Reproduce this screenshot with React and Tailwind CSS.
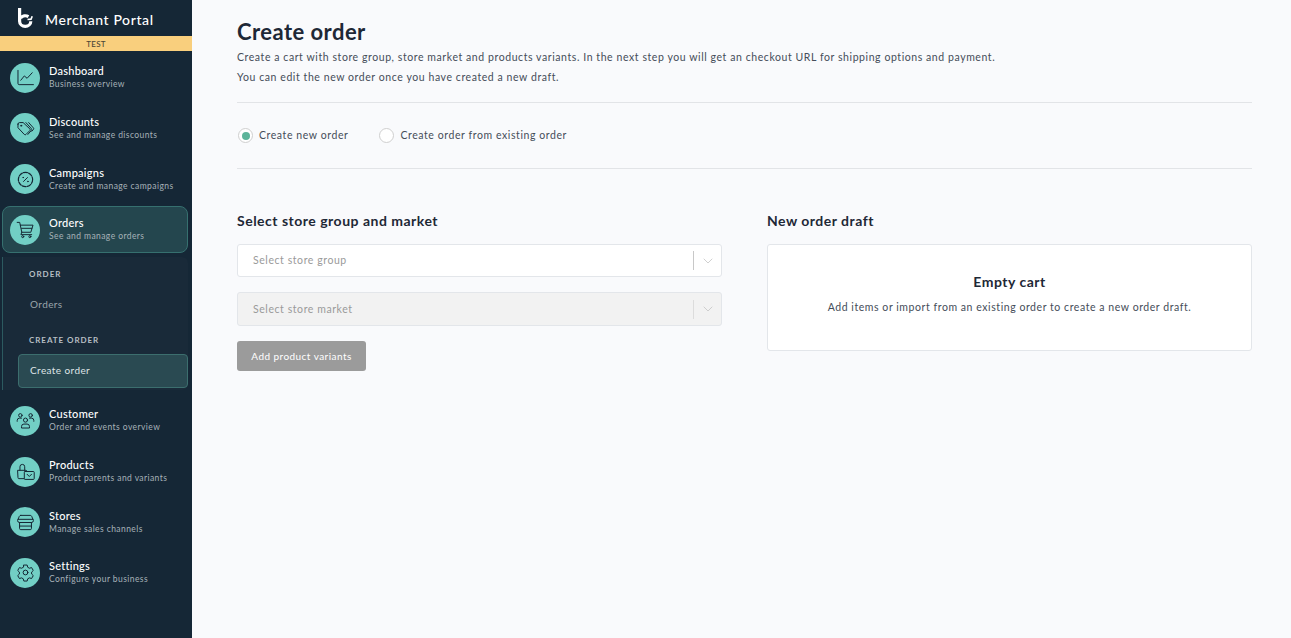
import React from "react";
import { ChevronDown } from "lucide-react";

const I = ({ children }) => (
  <svg width="19" height="19" viewBox="0 0 24 24" fill="none" stroke="#142634" strokeWidth="1.25" strokeLinecap="round" strokeLinejoin="round">{children}</svg>
);
const icons = {
  dash: <I><path d="M2.5 3v16.5a1.5 1.5 0 0 0 1.5 1.5h18" /><path d="M6 15.5l4.5-5.5 3.5 3 6.5-7" /></I>,
  disc: <I><path d="M2.5 6.5V11l8 8.5a1.5 1.5 0 0 0 2.1 0l4.9-4.9a1.5 1.5 0 0 0 0-2.1L9 4.5H4.5a2 2 0 0 0-2 2z" /><path d="M12.5 4.5l7 7.8a1.5 1.5 0 0 1 0 2L15 19.5" /><path d="M16 4.5l6 6.8a1.5 1.5 0 0 1 0 2L20 15.5" /><circle cx="6.5" cy="8.5" r="0.7" /></I>,
  camp: <I><circle cx="12" cy="12" r="9" strokeDasharray="5 1.6" strokeWidth="1.5" /><path d="M9.5 14.5l5-5" /><circle cx="9" cy="9.5" r="0.4" /><circle cx="15" cy="14.5" r="0.4" /></I>,
  cart: <I><path d="M1.5 3h3.2l2.6 12.5h11.4L21.5 6.5H5.5" /><path d="M7.3 15.5L6.2 18.5h13.6" /><path d="M7 10.5h13" /><circle cx="8.5" cy="21" r="1.3" /><circle cx="17.5" cy="21" r="1.3" /></I>,
  cust: <I><circle cx="12" cy="11.5" r="2.6" /><path d="M7 21v-1.5a3 3 0 0 1 3-3h4a3 3 0 0 1 3 3V21z" /><circle cx="5.5" cy="5.5" r="2.2" /><circle cx="18.5" cy="5.5" r="2.2" /><path d="M1.5 13v-1a3 3 0 0 1 3-3h2.5M22.5 13v-1a3 3 0 0 0-3-3H17" /></I>,
  prod: <I><path d="M2.5 10.5h10a1 1 0 0 1 1 1V20a1 1 0 0 1-1 1h-9a1 1 0 0 1-1-1z" /><path d="M5 10.5V6a3 3 0 0 1 6 0v4.5" /><rect x="10.5" y="12" width="12.5" height="10" rx="1" fill="#72cfc5" /><path d="M14 15.5l2.8 2.8 2.8-2.8" /></I>,
  store: <I><path d="M6 3h12a2 2 0 0 1 1.8 1.2L22 9.5a2.5 2.5 0 0 1-2.5 2.5h-15A2.5 2.5 0 0 1 2 9.5l2.2-5.3A2 2 0 0 1 6 3z" /><path d="M2.5 8h19" /><path d="M4.5 12v7.5A1.5 1.5 0 0 0 6 21h12a1.5 1.5 0 0 0 1.5-1.5V12" /><path d="M4.5 16.5h15" /></I>,
  set: <I><path d="M9.9 2.6h4.2l.7 2.8 2.1 1.2 2.8-.8 2.1 3.7-2.1 2 v2.4l2.1 2-2.1 3.7-2.8-.8-2.1 1.2-.7 2.8H9.9l-.7-2.8-2.1-1.2-2.8.8-2.1-3.7 2.1-2v-2.4l-2.1-2 2.1-3.7 2.8.8 2.1-1.2z" /><circle cx="12" cy="12" r="3" /></I>,
};

const NavItem = ({ icon, title, sub, active }) => (
  <div className={`h-[46.67px] mx-[2px] w-[186px] shrink-0 flex items-center pl-[7px] rounded-[8px] border ${active ? "bg-[#24464e] border-[#36706f]" : "border-transparent"}`}>
    <div className="w-[30px] h-[30px] rounded-full bg-[#72cfc5] flex items-center justify-center shrink-0">{icons[icon]}</div>
    <div className="ml-[9px]">
      <div className="text-[11px] leading-[13px] text-white tracking-[0.25px] font-medium">{title}</div>
      <div className="text-[8.5px] leading-[14px] text-[#a7b2b8] tracking-[0.42px]">{sub}</div>
    </div>
  </div>
);

const Select = ({ label, disabled, h, textClass }) => (
  <div className={`${h} flex items-center rounded-[3px] border border-[#e3e6ea] ${disabled ? "bg-[#f2f2f2]" : "bg-white"}`}>
    <span className={`flex-1 pl-[15px] text-[10.5px] text-[#9a9a9a] tracking-[0.57px] ${textClass}`}>{label}</span>
    <span className={`w-px h-[19px] ${disabled ? "bg-[#dcdcdc]" : "bg-[#c8c8c8]"}`} />
    <span className="w-[27px] flex justify-center"><ChevronDown size={16} strokeWidth={1.2} color="#c4c4c4" /></span>
  </div>
);

const Radio = ({ checked, label }) => (
  <div className="flex items-center gap-[6px]">
    <span className="w-[15px] h-[15px] rounded-full border border-[#cfcfcf] bg-white flex items-center justify-center">
      {checked && <span className="w-[8px] h-[8px] rounded-full bg-[#5cb49a]" />}
    </span>
    <span className="text-[10.5px] text-[#454d59] tracking-[0.58px]">{label}</span>
  </div>
);

export default function App() {
  return (
    <div className="flex h-[638px] overflow-hidden bg-[#f9fafc] font-['Lato','Liberation_Sans',sans-serif]">
      <aside className="w-[192px] shrink-0 bg-[#152736] flex flex-col">
        <div className="h-[36px] flex items-center pl-[18px] gap-[11px]">
          <svg width="16" height="20" viewBox="0 0 16 20" fill="none" stroke="#fff" strokeWidth="3.2" className="mt-[-1px]">
            <path d="M1.6 0v13.2a5.6 5.2 0 0 0 11.2 0" />
            <path d="M2.5 10a6 5.4 0 0 1 8-1.4" />
            <path d="M9.5 11.5l3.5-.3 1.2-3" strokeWidth="1.7" />
          </svg>
          <span className="text-[14px] text-white tracking-[0.6px] font-medium mt-[3px]">Merchant Portal</span>
        </div>
        <div className="h-[15px] bg-[#f9cf7d] flex items-center justify-center text-[8px] text-[#4b4636] tracking-[0.3px] font-medium">TEST</div>
        <div className="flex flex-col gap-[4px] pt-[3.37px]">
          <NavItem icon="dash" title="Dashboard" sub="Business overview" />
          <NavItem icon="disc" title="Discounts" sub="See and manage discounts" />
          <NavItem icon="camp" title="Campaigns" sub="Create and manage campaigns" />
          <NavItem icon="cart" title="Orders" sub="See and manage orders" active />
          <div className="mx-[2px] mb-[3.67px] w-[186px] h-[133px] border-l border-[#2c5a60] bg-[#192a39] rounded-r-[6px] pl-[15px]">
            <div className="pl-[11px] pt-[11px] text-[8px] leading-[12px] font-bold tracking-[1px] text-[#b7bfc4]">ORDER</div>
            <div className="pl-[12px] mt-[18px] text-[10px] leading-[13px] tracking-[0.4px] text-[#9aa5ab]">Orders</div>
            <div className="pl-[11px] mt-[23px] text-[8px] leading-[12px] font-bold tracking-[0.95px] text-[#b7bfc4]">CREATE ORDER</div>
            <div className="mt-[8px] h-[34px] flex items-center pl-[11px] pb-[1px] text-[10px] tracking-[0.4px] text-[#dfe5e7] bg-[#2a4a52] border border-[#3c6e6e] rounded-[4px]">Create order</div>
          </div>
          <NavItem icon="cust" title="Customer" sub="Order and events overview" />
          <NavItem icon="prod" title="Products" sub="Product parents and variants" />
          <NavItem icon="store" title="Stores" sub="Manage sales channels" />
          <NavItem icon="set" title="Settings" sub="Configure your business" />
        </div>
      </aside>
      <main className="flex-1 pl-[45px] pr-[39px]">
        <h1 className="pt-[18px] text-[22px] leading-[28px] font-bold text-[#1e2836] tracking-[0.45px]">Create order</h1>
        <p className="mt-[1px] text-[10.5px] leading-[20px] text-[#454d59] tracking-[0.575px]">Create a cart with store group, store market and products variants. In the next step you will get an checkout URL for shipping options and payment.</p>
        <p className="text-[10.5px] leading-[20px] text-[#454d59] tracking-[0.575px]">You can edit the new order once you have created a new draft.</p>
        <div className="mt-[15px] border-t border-[#e2e4e7]" />
        <div className="h-[65px] flex items-center gap-[31px] pl-[1px]">
          <Radio checked label="Create new order" />
          <Radio label="Create order from existing order" />
        </div>
        <div className="border-t border-[#e2e4e7]" />
        <div className="mt-[43px] grid grid-cols-2 gap-[45px]">
          <section>
            <h2 className="text-[14px] leading-[18px] font-bold text-[#1e2836] tracking-[0.5px]">Select store group and market</h2>
            <div className="mt-[14px] flex flex-col gap-[15px]">
              <Select h="h-[33px]" label="Select store group" textClass="" />
              <Select h="h-[34px]" label="Select store market" textClass="pt-[1px]" disabled />
            </div>
            <button className="mt-[15px] h-[30px] w-[129px] rounded-[3px] bg-[#9b9b9b] text-white text-[10px] tracking-[0.45px]">Add product variants</button>
          </section>
          <section>
            <h2 className="text-[14px] leading-[18px] font-bold text-[#1e2836] tracking-[0.5px]">New order draft</h2>
            <div className="mt-[14px] h-[107px] bg-white border border-[#e3e6ea] rounded-[3px] flex flex-col items-center pt-[28px]">
              <div className="text-[14px] leading-[18px] font-bold text-[#1e2836] tracking-[0.5px]">Empty cart</div>
              <div className="mt-[9px] text-[10.5px] leading-[14px] text-[#454d59] tracking-[0.56px]">Add items or import from an existing order to create a new order draft.</div>
            </div>
          </section>
        </div>
      </main>
    </div>
  );
}
